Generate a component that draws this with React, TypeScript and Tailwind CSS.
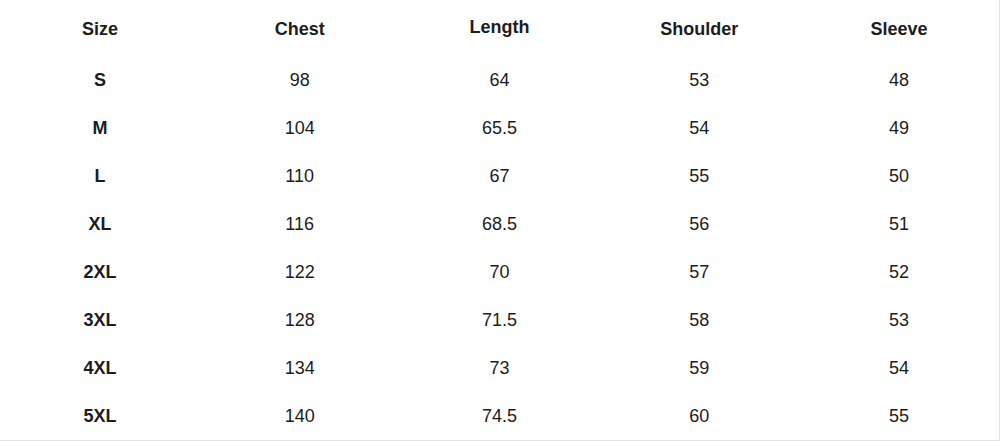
const headers = ['Size', 'Chest', 'Length', 'Shoulder', 'Sleeve'];

const rows = [
  ['S', '98', '64', '53', '48'],
  ['M', '104', '65.5', '54', '49'],
  ['L', '110', '67', '55', '50'],
  ['XL', '116', '68.5', '56', '51'],
  ['2XL', '122', '70', '57', '52'],
  ['3XL', '128', '71.5', '58', '53'],
  ['4XL', '134', '73', '59', '54'],
  ['5XL', '140', '74.5', '60', '55'],
];

export default function App() {
  return (
    <div className="h-[441px] w-[1000px] overflow-hidden bg-white font-['Liberation_Sans',Arial,sans-serif] text-[18px] text-[#1c1c1c]">
      <div className="h-[441px] w-[1000px] border-r border-b border-[#e4e4e4] pt-[2px]">
        <div className="grid h-[54px] grid-cols-5 items-center font-bold">
          {headers.map((h) => (
            <div key={h} className={h === 'Length' ? 'pb-1 text-center' : 'text-center'}>
              {h}
            </div>
          ))}
        </div>
        {rows.map((row) => (
          <div key={row[0]} className="grid h-[48px] grid-cols-5 items-center">
            {row.map((cell, i) => (
              <div key={i} className={i === 0 ? 'text-center font-bold' : 'text-center'}>
                {cell}
              </div>
            ))}
          </div>
        ))}
      </div>
    </div>
  );
}
